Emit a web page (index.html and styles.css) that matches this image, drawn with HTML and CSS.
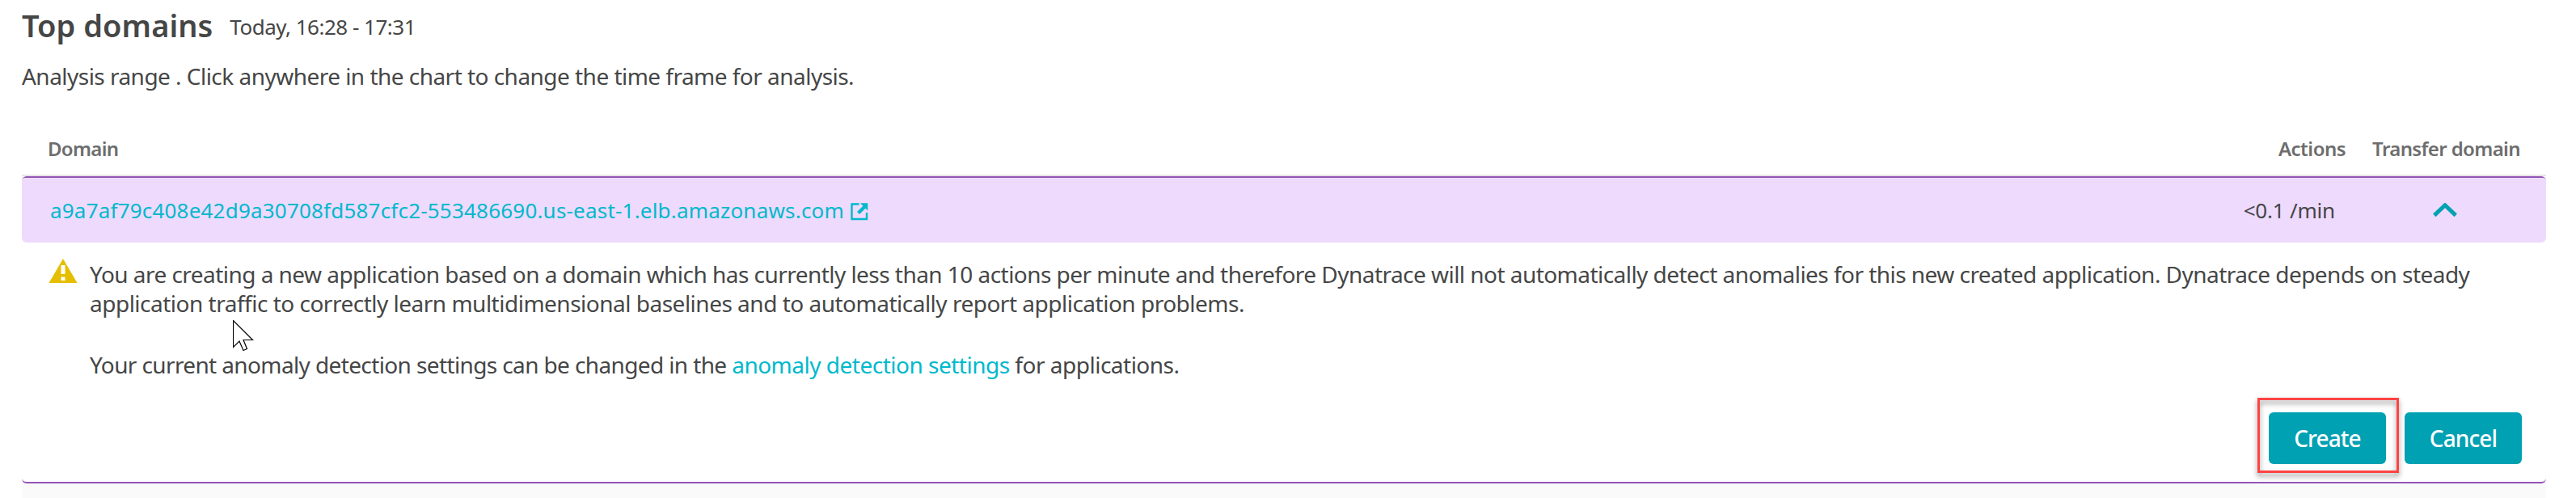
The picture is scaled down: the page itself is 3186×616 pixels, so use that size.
FILE: index.html
```html
<!DOCTYPE html>
<html lang="en">
<head>
<meta charset="utf-8">
<title>Top domains</title>
<link rel="stylesheet" href="styles.css">
</head>
<body>
<main class="page">
  <header class="heading">
    <h1 class="title">Top domains</h1>
    <span class="timeframe">Today, 16:28 - 17:31</span>
  </header>
  <p class="hint">Analysis range . Click anywhere in the chart to change the time frame for analysis.</p>
  <section class="table">
    <div class="columns">
      <span class="col-domain">Domain</span>
      <span class="col-actions">Actions</span>
      <span class="col-transfer">Transfer domain</span>
    </div>
    <div class="entry">
      <div class="row">
        <a class="domain">a9a7af79c408e42d9a30708fd587cfc2-553486690.us-east-1.elb.amazonaws.com</a>
        <svg class="external" viewBox="0 0 22 22" width="22" height="22"><path d="M10.500 1.500H1.500v18.500h18.500V12" fill="none" stroke="#00b9cc" stroke-width="2.4"/><path d="M12 0.3h9.200v9.200l-2.800-2.800-7.400 7.400-3-3 7.400-7.400z" fill="#00b9cc"/></svg>
        <span class="rate">&lt;0.1 /min</span>
        <svg class="chevron" viewBox="0 0 30 18" width="30" height="18"><path d="M1.800 15.400 15 2.800 28.200 15.400" fill="none" stroke="#00a1b2" stroke-width="5"/></svg>
      </div>
      <div class="details">
        <div class="message">
          <svg class="warning" viewBox="0 0 36 30" width="36" height="30"><path d="M18 0 35.500 30H.5z" fill="#e6be00"/><path d="M15.500 8h5v11h-5zM15.500 22.500h5V27h-5z" fill="#fff"/></svg>
          <div class="copy">
            <p class="paragraph"><span class="line-a">You are creating a new application based on a domain which has currently less than 10 actions per minute and therefore Dynatrace will not automatically detect anomalies for this new created application. Dynatrace depends on steady</span><br><span class="line-b">application traffic to correctly learn multidimensional baselines and to automatically report application problems.</span></p>
            <p class="paragraph"><span class="line-c">Your current anomaly detection settings can be changed in the </span><a class="link">anomaly detection settings</a> for applications.</p>
          </div>
        </div>
        <div class="buttons">
          <button class="button highlighted">Create</button>
          <button class="button">Cancel</button>
        </div>
      </div>
    </div>
  </section>
  <svg class="cursor" viewBox="0 0 26 40" width="26" height="40"><path d="M.5 .5V33.500L8 26l5 11.500 4.500-2L13 24.500H24.500z" fill="#fff" stroke="#000" stroke-width="1.2"/></svg>
</main>
</body>
</html>
```
FILE: styles.css
```css
* { box-sizing: border-box; }
body { margin: 0; background: #fff; }
.page {
  position: relative;
  height: 616px;
  padding: 9px 37px 0 27px;
  overflow: hidden;
  font-family: "Noto Sans", "Open Sans", sans-serif;
  font-size: 28px;
  line-height: 36px;
  letter-spacing: -0.5px;
  color: #454646;
  white-space: nowrap;
}
.heading { display: flex; gap: 21px; height: 67px; }
.title { margin: 0; font-size: 38px; line-height: 44px; font-weight: 600; letter-spacing: 0.05px; }
.timeframe { padding-top: 6px; font-size: 26px; }
.hint { margin: 0; height: 90px; letter-spacing: -0.53px; }
.table { background: #fafafa; height: 450px; }
.columns {
  display: flex;
  height: 52px;
  padding: 0 32px;
  background: #fff;
  border-bottom: 2px solid #e6e6e6;
  font-size: 24px;
  font-weight: 600;
  color: #6d6d6d;
}
.col-domain { flex: 1; letter-spacing: -0.7px; }
.col-actions { margin-right: 33px; letter-spacing: -0.5px; }
.col-transfer { letter-spacing: -0.62px; }
.entry {
  height: 380px;
  background: #fff;
  border-top: 2px solid #9355b7;
  border-bottom: 2px solid #9355b7;
  border-radius: 6px;
}
.row {
  display: flex;
  align-items: center;
  height: 80px;
  padding: 0 110px 0 35px;
  background: #eedafd;
  border-radius: 4px 4px 6px 6px;
  font-size: 26px;
}
.domain { color: #00b9cc; letter-spacing: 0.2px; }
.external { margin: 3px 0 0 8px; }
.rate { margin-left: auto; letter-spacing: -0.2px; }
.chevron { margin-left: 121px; }
.details { padding: 20px 30px 0 33px; }
.message { display: flex; gap: 15px; height: 190px; }
.warning { flex: none; }
.copy { display: flex; flex-direction: column; gap: 40px; padding-top: 1px; }
.paragraph { margin: 0; }
.line-a { letter-spacing: -0.54px; }
.line-b { letter-spacing: -0.5px; }
.line-c { letter-spacing: -0.62px; }
.link { color: #00b9cc; }
.buttons { display: flex; justify-content: flex-end; gap: 23px; }
.button {
  position: relative;
  width: 145px;
  height: 64px;
  padding: 0;
  border: 0;
  border-radius: 6px;
  background: #00a1b2;
  color: #fff;
  font: 500 28px/36px "Noto Sans", sans-serif;
  letter-spacing: -0.9px;
}
.highlighted::after {
  content: "";
  position: absolute;
  inset: -18px -16px -11px -14px;
  border: 3px solid #ff4343;
  filter: drop-shadow(0 4px 3px rgba(0, 0, 0, 0.45));
}
.cursor { position: absolute; left: 288px; top: 396px; }
```
